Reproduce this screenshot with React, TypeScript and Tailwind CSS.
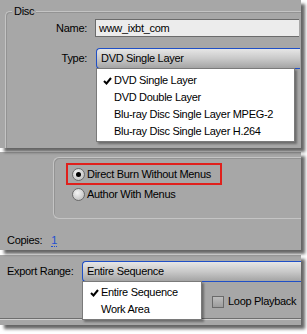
import React from "react";

const font = { fontFamily: '"Liberation Sans", Arial, sans-serif' };

function Check() {
  return (
    <svg width="9" height="8" viewBox="0 0 9 8" className="shrink-0">
      <path d="M1 4 L3.5 6.5 L8 1" stroke="#000" strokeWidth="2" fill="none" />
    </svg>
  );
}

function Radio({ on }: { on?: boolean }) {
  return (
    <div className="w-[13px] h-[13px] rounded-full border border-[#6a6a6a] bg-[radial-gradient(circle_at_40%_35%,#f4f4f4,#b5b5b5)] flex items-center justify-center shrink-0">
      {on && <div className="w-[5px] h-[5px] rounded-full bg-black" />}
    </div>
  );
}

function Select({ text, w }: { text: string; w: string }) {
  return (
    <div
      className={`${w} h-[21px] rounded-l-[4px] border border-r-0 border-[#1f4fc6] bg-[linear-gradient(#e6e6e6,#c9c9c9_50%,#a4a4a4)] flex items-center pl-[4px] text-black`}
    >
      {text}
    </div>
  );
}

export default function App() {
  return (
    <div
      className="w-[307px] h-[334px] bg-white overflow-hidden text-[11px] tracking-[-0.3px] text-black whitespace-nowrap"
      style={font}
    >
      {/* Panel 1 */}
      <div className="w-[301px] h-[148px] bg-[#a7a7a7] shadow-[4px_4px_3px_rgba(0,0,0,0.6)] pt-[11px] pl-[5px] overflow-hidden relative z-30">
        <div className="relative h-[160px] border-t border-l border-[#c4c4c4] rounded-tl-[5px] shadow-[inset_1px_1px_0_#939393]">
          <span className="absolute left-[6px] -top-[8px] bg-[#a7a7a7] px-[2px] leading-[14px]">Disc</span>
          <div className="pt-[7px] flex items-center">
            <div className="w-[82px] text-right pr-[1px]">Name:</div>
            <div className="ml-[7px] w-[204px] h-[18px] bg-[#ececec] border-t border-b border-l border-[#6b6b6b] flex items-center pl-[3px]">
              www_ixbt_com
            </div>
          </div>
          <div className="mt-[11px] flex items-center">
            <div className="w-[82px] text-right pr-[1px]">Type:</div>
            <div className="ml-[8px] relative">
              <Select text="DVD Single Layer" w="w-[204px]" />
              <div className="absolute left-0 top-[20px] w-[199px] h-[74px] bg-white border border-[#7a7a7a] shadow-[2px_2px_2px_rgba(0,0,0,0.35)] flex flex-col pt-[3px]">
                {[
                  "DVD Single Layer",
                  "DVD Double Layer",
                  "Blu-ray Disc Single Layer MPEG-2",
                  "Blu-ray Disc Single Layer H.264",
                ].map((t, i) => (
                  <div key={t} className="h-[17px] flex items-center">
                    <div className="w-[17px] flex justify-end pr-[2px]">{i === 0 && <Check />}</div>
                    <span>{t}</span>
                  </div>
                ))}
              </div>
            </div>
          </div>
        </div>
      </div>

      {/* Panel 2 */}
      <div className="mt-[4px] w-[301px] h-[98px] bg-[#a7a7a7] shadow-[4px_4px_3px_rgba(0,0,0,0.6)] pt-[5px] overflow-hidden relative z-20">
        <div className="ml-[53px] w-[260px] h-[62px] border-t border-l border-b border-[#c4c4c4] rounded-l-[6px] shadow-[inset_1px_1px_0_#939393] pt-[5px] pl-[12px]">
          <div className="w-[156px] h-[22px] border-2 border-[#e0201c] flex items-center pl-[4px] gap-[2px]">
            <Radio on />
            <span>Direct Burn Without Menus</span>
          </div>
          <div className="mt-[1px] h-[17px] flex items-center pl-[6px] gap-[2px]">
            <Radio />
            <span>Author With Menus</span>
          </div>
        </div>
        <div className="mt-[15px] pl-[7px] flex items-center h-[13px]">
          <span>Copies:</span>
          <span className="ml-[9px] text-[#1f4fd0] border-b border-dotted border-[#1f4fd0] leading-[11px]">1</span>
        </div>
      </div>

      {/* Panel 3 */}
      <div className="mt-[5px] w-[301px] h-[70px] bg-[#a7a7a7] shadow-[4px_4px_3px_rgba(0,0,0,0.6)] pt-[6px] relative z-10 flex flex-col">
        <div className="flex items-center">
          <div className="w-[82px] pl-[7px]">Export Range:</div>
          <div className="relative">
            <Select text="Entire Sequence" w="w-[219px]" />
            <div className="absolute left-0 top-[20px] w-[120px] h-[39px] bg-white border border-[#7a7a7a] shadow-[2px_2px_2px_rgba(0,0,0,0.35)] flex flex-col pt-[2px] z-10">
              {["Entire Sequence", "Work Area"].map((t, i) => (
                <div key={t} className="h-[17px] flex items-center">
                  <div className="w-[18px] flex justify-end pr-[2px]">{i === 0 && <Check />}</div>
                  <span>{t}</span>
                </div>
              ))}
            </div>
          </div>
        </div>
        <div className="mt-[13px] pl-[212px] flex items-center gap-[4px] h-[13px]">
          <div className="w-[12px] h-[12px] border border-[#6a6a6a] bg-[linear-gradient(#bdbdbd,#9c9c9c)] shrink-0" />
          <span>Loop Playback</span>
        </div>
        <div className="mt-[10px] h-[2px] border-t border-[#6e6e6e] border-b border-b-[#d0d0d0]" />
      </div>
    </div>
  );
}
